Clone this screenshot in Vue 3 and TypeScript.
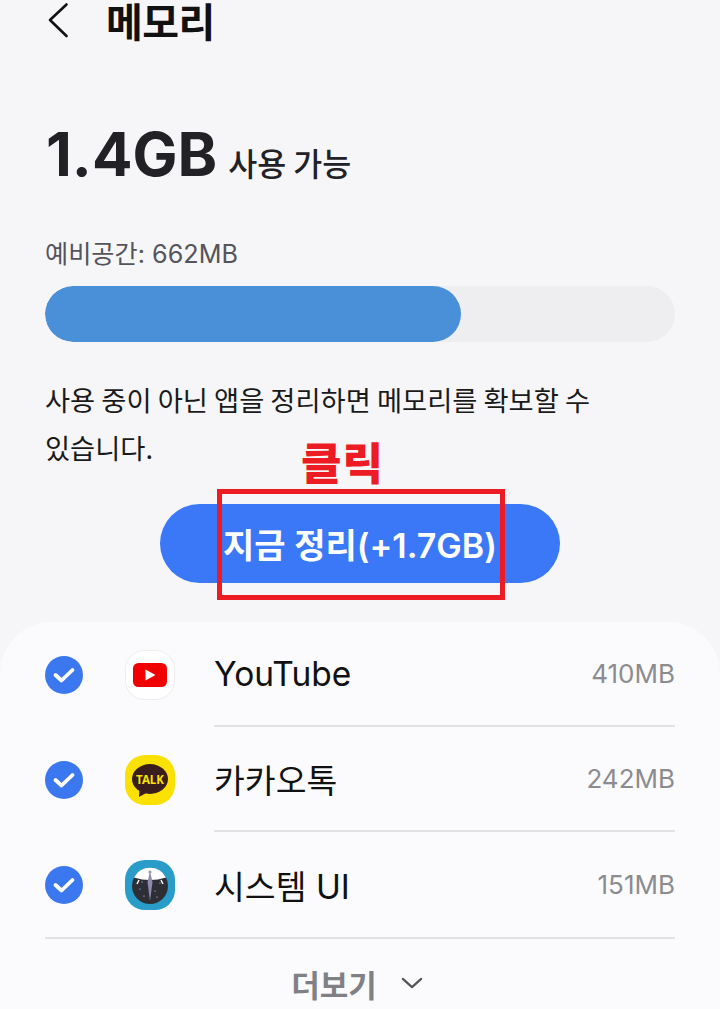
<script setup lang="ts">
interface AppRow { name: string; size: string; icon: 'yt' | 'talk' | 'sys' }
const rows: AppRow[] = [
  { name: 'YouTube', size: '410MB', icon: 'yt' },
  { name: '카카오톡', size: '242MB', icon: 'talk' },
  { name: '시스템 UI', size: '151MB', icon: 'sys' },
]
const stars: number[][] = [[17, 22], [30, 31], [15, 29], [35, 23], [32, 37], [19, 36]]
</script>

<template>
  <div class="page">
    <header class="top">
      <svg class="back" width="22" height="36" viewBox="0 0 22 36">
        <path d="M19.5 2.5 L3 18 L19.5 34" fill="none" stroke="#111" stroke-width="2.6" stroke-linecap="round" stroke-linejoin="round" />
      </svg>
      <h1 class="title">메모리</h1>
    </header>

    <section class="headline">
      <span class="big">1.4GB</span>
      <span class="avail">사용 가능</span>
    </section>

    <div class="reserve">예비공간: 662MB</div>
    <div class="track"><div class="fill" :style="{ width: '66%' }"></div></div>

    <p class="desc">사용 중이 아닌 앱을 정리하면 메모리를 확보할 수<br />있습니다.</p>

    <div class="action">
      <button class="clean">지금 정리(+1.7GB)</button>
      <div class="callout">
        <span class="click">클릭</span>
        <div class="redbox"></div>
      </div>
    </div>

    <section class="card">
      <div v-for="r in rows" :key="r.name" class="row">
        <svg class="check" width="38" height="38" viewBox="0 0 38 38">
          <circle cx="19" cy="19" r="19" fill="#3b78f0" />
          <path d="M10.5 19 L16.5 24.5 L27.5 14" fill="none" stroke="#fff" stroke-width="3.8" stroke-linecap="round" stroke-linejoin="round" />
        </svg>

        <svg v-if="r.icon === 'yt'" class="icon" width="50" height="50" viewBox="0 0 50 50">
          <rect x="0.5" y="0.5" width="49" height="49" rx="19" fill="#fff" stroke="#ececec" />
          <rect x="8" y="13" width="34" height="24" rx="5.5" fill="#f00000" />
          <path d="M20.5 19.5 L30.5 25 L20.5 30.5 Z" fill="#fff" />
        </svg>

        <svg v-else-if="r.icon === 'talk'" class="icon" width="50" height="50" viewBox="0 0 50 50">
          <rect width="50" height="50" rx="20" fill="#fae100" />
          <ellipse cx="25" cy="24" rx="18" ry="15" fill="#3a1d1d" />
          <path d="M14.5 33 L14 42 L23 37 Z" fill="#3a1d1d" />
          <text x="25" y="28.5" text-anchor="middle" class="talk">TALK</text>
        </svg>

        <svg v-else class="icon" width="50" height="50" viewBox="0 0 50 50">
          <rect width="50" height="50" rx="20" fill="#2a9cc9" />
          <circle cx="25" cy="26" r="18" fill="#2e2f36" />
          <path d="M9 17.5 A18 18 0 0 1 41 17.5 Q25 22.5 9 17.5 Z" fill="#fff" />
          <path d="M25 11 L27.5 22 L25 41 L22.5 22 Z" fill="#8d8cae" />
          <circle cx="25" cy="12" r="1.6" fill="#9a9ab0" />
          <path d="M12 24 L14 20 M38 24 L36 20" stroke="#fff" stroke-width="1.4" />
          <circle v-for="(s, i) in stars" :key="i" :cx="s[0]" :cy="s[1]" r="0.6" fill="#dfe0ea" />
        </svg>

        <div class="main">
          <span class="name">{{ r.name }}</span>
          <span class="size">{{ r.size }}</span>
        </div>
      </div>

      <div class="more">
        <span>더보기</span>
        <svg width="22" height="14" viewBox="0 0 24 14">
          <path d="M2 2.5 L12 11.5 L22 2.5" fill="none" stroke="#555" stroke-width="2.4" stroke-linecap="round" stroke-linejoin="round" />
        </svg>
      </div>
    </section>
  </div>
</template>

<style>
html, body { margin: 0; background: #f6f6f9; }
</style>

<style scoped>
.page {
  width: 720px;
  height: 1009px;
  overflow: hidden;
  background: #f6f6f9;
  font-family: "Noto Sans CJK KR", "Noto Sans", sans-serif;
  color: #111;
  box-sizing: border-box;
}
.top {
  display: flex;
  align-items: center;
  height: 40px;
  padding-left: 47px;
  gap: 37px;
}
.title {
  margin: 0;
  font-size: 40px;
  font-weight: 700;
  line-height: 40px;
  letter-spacing: -0.5px;
}
.headline {
  display: flex;
  align-items: baseline;
  gap: 11px;
  margin-top: 75px;
  padding-left: 46px;
  height: 78px;
  color: #222226;
}
.big {
  font-family: Inter, "Noto Sans", sans-serif;
  font-size: 60px;
  line-height: 78px;
  font-weight: 700;
}
.avail {
  font-size: 31.5px;
  font-weight: 500;
}
.reserve {
  margin-top: 44px;
  padding-left: 45px;
  font-family: Inter, "Noto Sans CJK KR", sans-serif;
  font-size: 25.2px;
  line-height: 34px;
  color: #54545a;
}
.track {
  margin: 15px 45px 0;
  height: 56px;
  border-radius: 28px;
  background: #eeeef0;
  overflow: hidden;
}
.fill {
  height: 100%;
  border-radius: 28px;
  background: #4a90d9;
}
.desc {
  margin: 33px 45px 0;
  font-size: 27.3px;
  line-height: 48px;
  color: #1a1a1a;
  white-space: nowrap;
}
.action {
  position: relative;
  display: flex;
  justify-content: center;
  margin-top: 33px;
}
.clean {
  width: 400px;
  height: 79px;
  border: 0;
  border-radius: 40px;
  background: #3b78f8;
  color: #fff;
  font-family: Inter, "Noto Sans CJK KR", sans-serif;
  font-size: 34px;
  font-weight: 600;
  padding: 0;
}
.callout {
  position: absolute;
  left: 217px;
  top: -15px;
  width: 288px;
  height: 111px;
}
.redbox {
  width: 100%;
  height: 100%;
  box-sizing: border-box;
  border: 5px solid #ed1c24;
}
.click {
  position: absolute;
  left: 84px;
  top: -56px;
  font-size: 44px;
  line-height: 56px;
  font-weight: 900;
  color: #ed1c24;
  letter-spacing: 1px;
}
.card {
  margin-top: 39px;
  background: #fbfbfe;
  border-radius: 52px 52px 0 0;
  padding: 0 45px;
  height: 387px;
}
.row {
  display: flex;
  align-items: center;
  height: 105px;
  position: relative;
}
.check { flex: none; }
.icon { flex: none; margin-left: 42px; }
.talk {
  font-family: "Noto Sans", sans-serif;
  font-size: 11.5px;
  font-weight: 700;
  fill: #fae100;
}
.main {
  flex: 1;
  align-self: stretch;
  display: flex;
  align-items: center;
  justify-content: space-between;
  margin-left: 39px;
  border-bottom: 2px solid #e2e2e4;
}
.row:nth-child(3) .main { border-bottom: 0; }
.row:nth-child(3)::after {
  content: "";
  position: absolute;
  left: 0;
  right: 0;
  bottom: -2px;
  border-bottom: 2px solid #e2e2e4;
}
.name {
  font-family: Inter, "Noto Sans CJK KR", sans-serif;
  font-size: 33.5px;
  color: #111;
}
.size {
  font-family: Inter, sans-serif;
  font-size: 26px;
  color: #8c8c90;
}
.more {
  display: flex;
  align-items: center;
  justify-content: center;
  gap: 24px;
  height: 88px;
  margin-top: 2px;
  padding-right: 6px;
  box-sizing: border-box;
  color: #808085;
  font-size: 31px;
  font-weight: 700;
}
</style>
